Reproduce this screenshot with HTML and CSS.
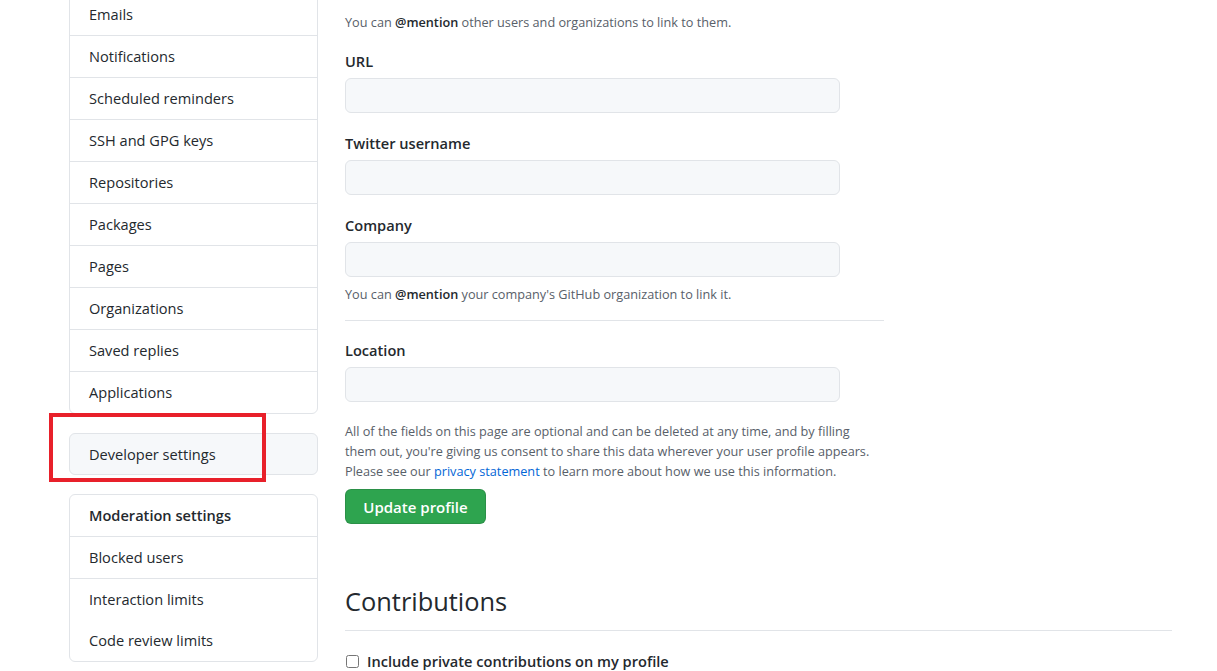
FILE: index.html
```html
<!DOCTYPE html>
<html lang="en">
<head>
    <meta charset="UTF-8">
    <meta name="viewport" content="width=device-width, initial-scale=1.0">
    <title>Public profile</title>
    <link rel="stylesheet" href="styles.css">
</head>
<body>
    <div class="layout">
        <nav class="sidebar">
            <div class="menu">
                <a class="menu-item" href="#">Emails</a>
                <a class="menu-item" href="#">Notifications</a>
                <a class="menu-item" href="#">Scheduled reminders</a>
                <a class="menu-item" href="#">SSH and GPG keys</a>
                <a class="menu-item" href="#">Repositories</a>
                <a class="menu-item" href="#">Packages</a>
                <a class="menu-item" href="#">Pages</a>
                <a class="menu-item" href="#">Organizations</a>
                <a class="menu-item" href="#">Saved replies</a>
                <a class="menu-item" href="#">Applications</a>
            </div>
            <div class="menu menu-dev">
                <a class="menu-item" href="#">Developer settings</a>
            </div>
            <div class="menu">
                <div class="menu-heading">Moderation settings</div>
                <a class="menu-item" href="#">Blocked users</a>
                <a class="menu-item no-border" href="#">Interaction limits</a>
                <a class="menu-item" href="#">Code review limits</a>
            </div>
            <div class="annotation"></div>
        </nav>

        <main class="content">
            <form class="profile-form" action="#" method="post">
                <p class="note">You can <strong>@mention</strong> other users and organizations to link to them.</p>

                <div class="form-group">
                    <label for="url">URL</label>
                    <input type="text" id="url" name="url">
                </div>

                <div class="form-group">
                    <label for="twitter">Twitter username</label>
                    <input type="text" id="twitter" name="twitter">
                </div>

                <div class="form-group">
                    <label for="company">Company</label>
                    <input type="text" id="company" name="company">
                    <p class="note note-under">You can <strong>@mention</strong> your company's GitHub organization to link it.</p>
                </div>

                <hr class="divider">

                <div class="form-group after-divider">
                    <label for="location">Location</label>
                    <input type="text" id="location" name="location">
                </div>

                <p class="note disclaimer">All of the fields on this page are optional and can be deleted at any time, and by filling<br>them out, you're giving us consent to share this data wherever your user profile appears.<br>Please see our <a href="#">privacy statement</a> to learn more about how we use this information.</p>

                <button type="submit" class="btn-primary">Update profile</button>
            </form>

            <div class="subhead">
                <h2>Contributions</h2>
            </div>
            <label class="check">
                <input type="checkbox" name="private_contributions">
                Include private contributions on my profile
            </label>
        </main>
    </div>
</body>
</html>
```

FILE: styles.css
```css
body {
    margin: 0;
    font-family: "Segoe UI", "Open Sans", Arial, sans-serif;
    color: #24292e;
    background-color: #fff;
}
a {
    color: inherit;
    text-decoration: none;
}
.layout {
    display: flex;
    align-items: flex-start;
    gap: 27px;
    margin: -7px 0 0 69px;
}

/* sidebar */
.sidebar {
    position: relative;
    width: 249px;
    flex-shrink: 0;
}
.menu {
    border: 1px solid #e1e4e8;
    border-radius: 6px;
    margin-bottom: 19px;
    background-color: #fff;
}
.menu-item,
.menu-heading {
    display: block;
    height: 41px;
    line-height: 41px;
    padding: 0 19px;
    font-size: 14.6px;
    border-bottom: 1px solid #e1e4e8;
    white-space: nowrap;
}
.menu-heading {
    font-weight: 600;
}
.menu-item:last-child,
.menu-item.no-border {
    border-bottom: none;
}
.menu-dev {
    background-color: #f6f8fa;
}
.menu-dev .menu-item {
    height: 40px;
    line-height: 40px;
}
.annotation {
    position: absolute;
    left: -20px;
    top: 420px;
    width: 209px;
    height: 61px;
    border: 4px solid #e8202a;
}

/* main column */
.content {
    width: 827px;
    padding-top: 20px;
}
.profile-form {
    width: 539px;
}
.note {
    margin: 0;
    font-size: 12.7px;
    line-height: 18px;
    color: #586069;
}
.note strong {
    color: #24292e;
    font-weight: 600;
}
.form-group {
    margin-top: 20px;
}
.form-group label {
    display: block;
    font-size: 14.6px;
    font-weight: 600;
    line-height: 20px;
    margin-bottom: 7px;
}
.form-group input {
    display: block;
    box-sizing: border-box;
    width: 495px;
    height: 35px;
    padding: 5px 12px;
    font-size: 14.6px;
    background-color: #f6f8fa;
    border: 1px solid #e1e4e8;
    border-radius: 6px;
}
.note-under {
    margin-top: 8px;
}
.divider {
    height: 0;
    margin: 17px 0 0;
    border: none;
    border-top: 1px solid #e1e4e8;
}
.form-group.after-divider {
    margin-top: 19px;
}
.disclaimer {
    margin-top: 19px;
    line-height: 20px;
    white-space: nowrap;
}
.disclaimer a {
    color: #0366d6;
}
.btn-primary {
    display: block;
    width: 141px;
    height: 35px;
    margin-top: 8px;
    padding: 0;
    font-family: inherit;
    font-size: 15px;
    font-weight: 600;
    color: #fff;
    background-color: #2ea44f;
    border: 1px solid rgba(27, 31, 35, 0.15);
    border-radius: 6px;
    cursor: pointer;
}
.subhead {
    margin-top: 61px;
    padding-bottom: 12px;
    border-bottom: 1px solid #e1e4e8;
}
.subhead h2 {
    margin: 0;
    font-size: 25.4px;
    font-weight: 400;
    line-height: 33px;
}
.check {
    display: flex;
    align-items: center;
    gap: 8px;
    margin-top: 20px;
    font-size: 14.6px;
    font-weight: 600;
    line-height: 20px;
}
.check input {
    width: 13px;
    height: 13px;
    margin: 0 0 0 1px;
}
```
